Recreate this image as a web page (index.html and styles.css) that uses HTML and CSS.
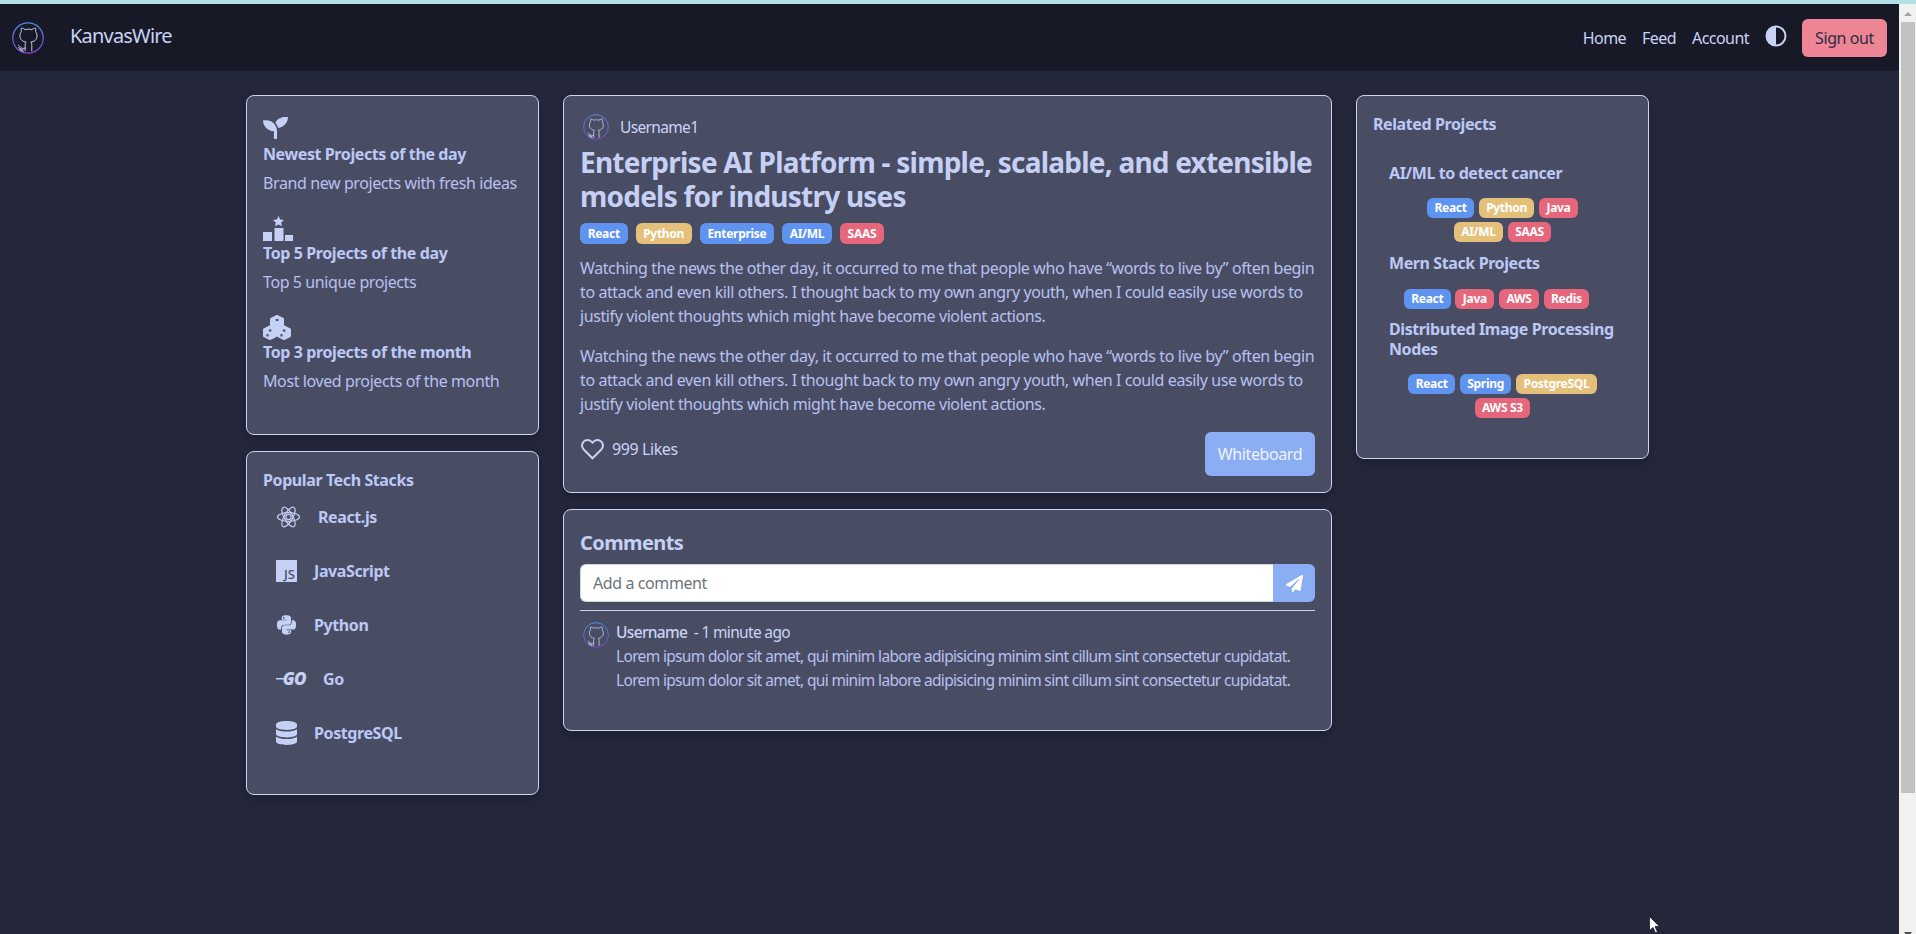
FILE: index.html
```html
<!DOCTYPE html>
<html>
    <head>
        <meta charset="UTF-8"/>
        <title>KanvasWire</title>
        <link rel="stylesheet" href="styles.css">
    </head>

    <body>
        <svg class="defs" width="0" height="0">
            <defs>
                <linearGradient id="ring" x1="0" y1="0" x2="0" y2="1">
                    <stop offset="0" stop-color="#4f8fe8"/>
                    <stop offset="1" stop-color="#8a3fd0"/>
                </linearGradient>
                <symbol id="logo" viewBox="0 0 32 32">
                    <circle cx="16" cy="16" r="15.2" fill="none" stroke="url(#ring)" stroke-width="1.2"/>
                    <g transform="translate(4.6 5.2) scale(0.95)" fill="none" stroke="#cad3f5" stroke-width="1" stroke-linecap="round" stroke-linejoin="round">
                        <path d="M9 22c-5 1.5-5-2.5-7-3m14 6v-6.87a3.37 3.37 0 0 0-.94-2.61c3.14-.35 6.44-1.54 6.44-7A5.44 5.44 0 0 0 20 4.77 5.07 5.07 0 0 0 19.91 1S18.73.65 16 2.48a13.38 13.38 0 0 0-7 0C6.27.65 5.09 1 5.09 1A5.07 5.07 0 0 0 5 4.77a5.44 5.44 0 0 0-1.5 3.75c0 5.42 3.3 6.61 6.44 7A3.37 3.37 0 0 0 9 18.13V25"/>
                        <path d="M2 21.5l5 2.5M3 23.5l4 2"/>
                    </g>
                </symbol>
            </defs>
        </svg>

        <div class="strip"></div>

        <div class="frame">
            <div class="page">
                <nav class="navbar">
                    <svg class="nav-logo"><use href="#logo"/></svg>
                    <span class="brand">KanvasWire</span>
                    <ul class="nav-links">
                        <li>Home</li>
                        <li>Feed</li>
                        <li>Account</li>
                    </ul>
                    <svg class="theme-toggle" viewBox="0 0 22 22">
                        <circle cx="11" cy="11" r="9.5" fill="#181926" stroke="#cad3f5" stroke-width="2"/>
                        <path d="M11 2a9 9 0 0 0 0 18z" fill="#cad3f5"/>
                    </svg>
                    <button class="signout">Sign out</button>
                </nav>

                <main class="layout">
                    <aside class="column">
                        <section class="card features">
                            <div class="feature">
                                <div class="feature-icon">
                                    <svg class="ic-seed" viewBox="0 32 512 448"><path d="M64 96H0c0 123.7 100.3 224 224 224v144c0 8.800 7.200 16 16 16h32c8.800 0 16-7.200 16-16V320C288 196.300 187.700 96 64 96zm384-64c-84.200 0-157.400 46.500-195.700 115.200 27.700 30.200 48.200 66.900 59 107.600C424 243.100 512 147.900 512 32h-64z"/></svg>
                                </div>
                                <h3>Newest Projects of the day</h3>
                                <p>Brand new projects with fresh ideas</p>
                            </div>
                            <div class="feature">
                                <div class="feature-icon">
                                    <svg class="ic-rank" viewBox="0 0 30 25">
                                        <polygon points="15.500,0 17.200,3.400 21,3.900 18.200,6.500 18.900,10.200 15.500,8.400 12.100,10.200 12.800,6.500 10,3.900 13.800,3.400"/>
                                        <rect x="0" y="16" width="9" height="9"/>
                                        <rect x="11.500" y="12" width="9" height="13"/>
                                        <rect x="22" y="19" width="8" height="6"/>
                                    </svg>
                                </div>
                                <h3>Top 5 Projects of the day</h3>
                                <p>Top 5 unique projects</p>
                            </div>
                            <div class="feature">
                                <div class="feature-icon">
                                    <svg class="ic-cubes" viewBox="0 0 28 25">
                                        <g stroke="#c6d0f5" stroke-width="2" stroke-linejoin="round">
                                            <polygon points="14,1 20,4 20,10.500 14,13.500 8,10.500 8,4"/>
                                            <polygon points="7,11.500 13,14.500 13,21 7,24 1,21 1,14.500"/>
                                            <polygon points="21,11.500 27,14.500 27,21 21,24 15,21 15,14.500"/>
                                        </g>
                                        <g fill="#494d64">
                                            <rect x="12.800" y="4" width="2.600" height="2"/>
                                            <rect x="5.800" y="14.500" width="2.600" height="2"/>
                                            <rect x="19.800" y="14.500" width="2.600" height="2"/>
                                            <rect x="3.500" y="19" width="2" height="2.500"/>
                                            <rect x="17.500" y="19" width="2" height="2.500"/>
                                        </g>
                                    </svg>
                                </div>
                                <h3>Top 3 projects of the month</h3>
                                <p>Most loved projects of the month</p>
                            </div>
                        </section>

                        <section class="card stacks">
                            <h3>Popular Tech Stacks</h3>
                            <ul class="stack-list">
                                <li>
                                    <svg class="ic-react" viewBox="0 0 24 22">
                                        <g fill="none" stroke="#c6d0f5" stroke-width="1.200">
                                            <ellipse cx="12" cy="11" rx="11" ry="4.300"/>
                                            <ellipse cx="12" cy="11" rx="11" ry="4.300" transform="rotate(60 12 11)"/>
                                            <ellipse cx="12" cy="11" rx="11" ry="4.300" transform="rotate(120 12 11)"/>
                                            <circle cx="12" cy="11" r="2.600"/>
                                        </g>
                                    </svg>
                                    <span>React.js</span>
                                </li>
                                <li>
                                    <div class="ic-js">JS</div>
                                    <span>JavaScript</span>
                                </li>
                                <li>
                                    <svg class="ic-python" viewBox="0 0 448 512"><path d="M439.800 200.500c-7.700-30.900-22.300-54.200-53.400-54.200h-40.100v47.400c0 36.800-31.200 67.800-66.800 67.800H172.700c-29.200 0-53.400 25-53.400 54.300v101.800c0 29 25.200 46 53.400 54.300 33.800 9.900 66.300 11.700 106.800 0 26.900-7.800 53.400-23.500 53.400-54.300v-40.700H226.200v-13.600h160.200c31.100 0 42.600-21.700 53.400-54.200 11.200-33.500 10.700-65.700 0-108.600zM286.200 404c11.100 0 20.100 9.100 20.100 20.300 0 11.300-9 20.400-20.100 20.400-11 0-20.100-9.200-20.100-20.400.1-11.300 9.100-20.300 20.100-20.300zM167.800 248.100h106.800c29.700 0 53.400-24.500 53.400-54.300V91.900c0-29-24.400-50.700-53.400-55.600-35.800-5.900-74.700-5.600-106.800.1-45.200 8-53.400 24.700-53.400 55.600v40.700h106.900v13.600h-147c-31.100 0-58.300 18.700-66.800 54.200-9.800 40.700-10.200 66.100 0 108.600 7.600 31.600 25.700 54.200 56.800 54.200H101v-48.800c0-35.300 30.500-66.400 66.800-66.400zm-6.700-142.600c-11.100 0-20.100-9.100-20.100-20.300.1-11.300 9-20.400 20.100-20.400 11 0 20.100 9.200 20.100 20.400s-9 20.300-20.100 20.300z"/></svg>
                                    <span>Python</span>
                                </li>
                                <li>
                                    <div class="ic-go">GO</div>
                                    <span>Go</span>
                                </li>
                                <li>
                                    <svg class="ic-db" viewBox="0 0 448 512"><path d="M448 73.143v45.714C448 159.143 347.667 192 224 192S0 159.143 0 118.857V73.143C0 32.857 100.333 0 224 0s224 32.857 224 73.143zM448 176v102.857C448 319.143 347.667 352 224 352S0 319.143 0 278.857V176c48.125 33.143 136.208 48.572 224 48.572S399.874 209.143 448 176zm0 160v102.857C448 479.143 347.667 512 224 512S0 479.143 0 438.857V336c48.125 33.143 136.208 48.572 224 48.572S399.874 369.143 448 336z"/></svg>
                                    <span>PostgreSQL</span>
                                </li>
                            </ul>
                        </section>
                    </aside>

                    <div class="column">
                        <article class="card post">
                            <div class="post-user">
                                <svg class="avatar"><use href="#logo"/></svg>
                                <span>Username1</span>
                            </div>
                            <h1>Enterprise AI Platform - simple, scalable, and extensible models for industry uses</h1>
                            <div class="tags post-tags">
                                <span class="tag blue">React</span>
                                <span class="tag yellow">Python</span>
                                <span class="tag blue">Enterprise</span>
                                <span class="tag blue">AI/ML</span>
                                <span class="tag red">SAAS</span>
                            </div>
                            <p>Watching the news the other day, it occurred to me that people who have “words to live by” often begin to attack and even kill others. I thought back to my own angry youth, when I could easily use words to justify violent thoughts which might have become violent actions.</p>
                            <p>Watching the news the other day, it occurred to me that people who have “words to live by” often begin to attack and even kill others. I thought back to my own angry youth, when I could easily use words to justify violent thoughts which might have become violent actions.</p>
                            <div class="post-actions">
                                <div class="likes">
                                    <svg class="heart" viewBox="0 0 24 22"><path d="M20.840 3.610a5.500 5.500 0 0 0-7.780 0L12 4.670l-1.060-1.060a5.500 5.500 0 0 0-7.780 7.780l1.060 1.060L12 20.230l7.780-7.780 1.060-1.060a5.500 5.500 0 0 0 0-7.780z"/></svg>
                                    <span>999 Likes</span>
                                </div>
                                <button class="whiteboard">Whiteboard</button>
                            </div>
                        </article>

                        <section class="card comments">
                            <h2>Comments</h2>
                            <div class="comment-form">
                                <input type="text" placeholder="Add a comment">
                                <button class="send">
                                    <svg viewBox="0 0 512 512"><path d="M476 3.200L12.500 270.600c-18.100 10.400-15.800 35.600 2.200 43.200L121 358.400l287.300-253.200c5.500-4.900 13.300 2.600 8.600 8.300L176 407v80.500c0 23.600 28.500 32.900 42.500 15.800L282 426l124.600 52.200c14.200 6 30.400-2.900 33-18.200l72-432C515 7.800 493.300-6.800 476 3.200z"/></svg>
                                </button>
                            </div>
                            <div class="comment">
                                <svg class="avatar"><use href="#logo"/></svg>
                                <div class="comment-body">
                                    <div><span class="comment-user">Username</span> <span class="comment-time">- 1 minute ago</span></div>
                                    <div>Lorem ipsum dolor sit amet, qui minim labore adipisicing minim sint cillum sint consectetur cupidatat.</div>
                                    <div>Lorem ipsum dolor sit amet, qui minim labore adipisicing minim sint cillum sint consectetur cupidatat.</div>
                                </div>
                            </div>
                        </section>
                    </div>

                    <aside class="column">
                        <section class="card related">
                            <h3>Related Projects</h3>
                            <div class="related-item">
                                <h4>AI/ML to detect cancer</h4>
                                <div class="tags">
                                    <span class="tag blue">React</span>
                                    <span class="tag yellow">Python</span>
                                    <span class="tag red">Java</span>
                                    <span class="tag yellow">AI/ML</span>
                                    <span class="tag red">SAAS</span>
                                </div>
                            </div>
                            <div class="related-item">
                                <h4>Mern Stack Projects</h4>
                                <div class="tags tags-mern">
                                    <span class="tag blue">React</span>
                                    <span class="tag red">Java</span>
                                    <span class="tag red">AWS</span>
                                    <span class="tag red">Redis</span>
                                </div>
                            </div>
                            <div class="related-item">
                                <h4>Distributed Image Processing Nodes</h4>
                                <div class="tags">
                                    <span class="tag blue">React</span>
                                    <span class="tag blue">Spring</span>
                                    <span class="tag yellow">PostgreSQL</span>
                                    <span class="tag red">AWS S3</span>
                                </div>
                            </div>
                        </section>
                    </aside>
                </main>
            </div>

            <div class="scrollbar">
                <div class="arrow-up"></div>
                <div class="thumb"></div>
                <div class="arrow-down"></div>
            </div>
        </div>

        <svg class="cursor" width="12" height="18" viewBox="0 0 12 18"><path d="M0.500 0.500V14.500L4 11.500L6.500 17L8.500 16L6 10.500H10.500Z" fill="#fff" stroke="#181926" stroke-width="0.800"/></svg>
    </body>
</html>
```

FILE: styles.css
```css
*{
    box-sizing:border-box;
}
html,body{
    margin:0;
    height:100%;
    overflow:hidden;
}
body{
    display:flex;
    flex-direction:column;
    background:#24273a;
    color:#b8c0f0;
    font-family:"Noto Sans","Open Sans",sans-serif;
    font-size:16px;
    letter-spacing:-0.4px;
    line-height:24px;
}
h1,h2,h3,h4,p,ul{
    margin:0;
    padding:0;
}
ul{
    list-style:none;
}
.defs{
    display:block;
    height:0;
}

.strip{
    height:4px;
    flex:none;
    background:#b3e0e4;
}
.frame{
    flex:1;
    display:flex;
    min-height:0;
}
.page{
    flex:1;
    min-width:0;
}

/* scrollbar */
.scrollbar{
    width:17px;
    flex:none;
    display:flex;
    flex-direction:column;
    align-items:center;
    background:#f1f1f1;
}
.arrow-up{
    width:0;
    height:0;
    margin-top:8px;
    border-left:4px solid transparent;
    border-right:4px solid transparent;
    border-bottom:4px solid #a3a3a3;
}
.thumb{
    width:14px;
    height:771px;
    margin-top:6px;
    background:#c1c1c1;
}
.arrow-down{
    width:0;
    height:0;
    margin-top:auto;
    margin-bottom:-3px;
    border-left:4px solid transparent;
    border-right:4px solid transparent;
    border-top:5px solid #505050;
}

/* navbar */
.navbar{
    height:67px;
    display:flex;
    align-items:center;
    padding:0 12px;
    background:#181926;
    color:#cad3f5;
}
.nav-logo{
    width:32px;
    height:32px;
    flex:none;
}
.brand{
    margin-left:26px;
    font-size:20px;
    letter-spacing:-0.8px;
    margin-top:-3px;
}
.nav-links{
    display:flex;
    gap:16px;
    margin-left:auto;
    letter-spacing:-0.55px;
}
.theme-toggle{
    width:22px;
    height:22px;
    margin:-4px 15px 0 16px;
}
.signout{
    width:85px;
    height:38px;
    border:none;
    border-radius:6px;
    background:#ee8595;
    color:#2b2d42;
    font:inherit;
    letter-spacing:inherit;
}

/* page grid */
.layout{
    display:grid;
    grid-template-columns:293px 769px 293px;
    column-gap:24px;
    align-items:start;
    padding:24px 0 0 246px;
}
.column{
    display:flex;
    flex-direction:column;
    gap:16px;
}
.card{
    background:#494d64;
    border:1px solid #cad3f5;
    border-radius:8px;
    box-shadow:0 4px 8px rgba(0,0,0,.2);
    padding:16px;
}
h3,h4{
    color:#bcc8f5;
    font-size:16px;
    font-weight:700;
}

/* left cards */
.features{
    height:340px;
    padding:21px 16px 0;
}
.feature{
    margin-bottom:22px;
}
.feature:last-child{
    margin-bottom:0;
}
.feature-icon{
    height:25px;
}
.feature-icon svg{
    display:block;
    fill:#c6d0f5;
}
.ic-seed{
    width:25px;
    height:22px;
}
.ic-rank{
    width:30px;
    height:25px;
    margin-top:-1px;
}
.ic-cubes{
    width:28px;
    height:25px;
    margin-top:-1px;
}
.feature p{
    margin-top:5px;
}

.stacks{
    height:344px;
}
.stack-list{
    display:flex;
    flex-direction:column;
    gap:24px;
    margin-top:10px;
    padding-left:13px;
}
.stack-list li{
    display:flex;
    align-items:center;
    gap:17px;
    height:30px;
    color:#bcc8f5;
    font-weight:700;
}
.stack-list svg{
    fill:#c6d0f5;
    flex:none;
}
.ic-react{
    width:25px;
    height:22px;
}
.ic-js{
    width:21px;
    height:22px;
    padding:7px 2px 0 0;
    background:#c6d0f5;
    color:#494d64;
    font-size:13px;
    font-weight:500;
    line-height:15px;
    text-align:right;
    letter-spacing:0;
}
.ic-python{
    width:21px;
    height:22px;
}
.ic-go{
    width:30px;
    color:#c6d0f5;
    font-size:17px;
    font-weight:900;
    font-style:italic;
    line-height:20px;
    text-align:right;
    letter-spacing:-0.6px;
    background:linear-gradient(#c6d0f5,#c6d0f5) no-repeat 0 9px/8px 1.5px;
}
.ic-db{
    width:21px;
    height:24px;
}

/* post */
.post{
    height:398px;
    padding:18px 16px 16px;
}
.post-user{
    display:flex;
    align-items:center;
    gap:11px;
    padding-left:3px;
    color:#cad3f5;
    font-size:15.5px;
    letter-spacing:-0.66px;
}
.avatar{
    width:26px;
    height:26px;
    flex:none;
}
.post h1{
    margin-top:5px;
    color:#c6d0f5;
    font-size:28px;
    font-weight:700;
    line-height:34px;
    letter-spacing:-0.78px;
}
.tags{
    display:flex;
    flex-wrap:wrap;
    justify-content:center;
    gap:4px 4.5px;
}
.post-tags{
    justify-content:flex-start;
    gap:8px;
    margin-top:10px;
    margin-bottom:12px;
}
.tag{
    height:20px;
    padding:0 7.5px;
    border-radius:6px;
    color:#fff;
    font-size:12px;
    font-weight:700;
    line-height:20px;
    letter-spacing:-0.3px;
}
.post-tags .tag{
    height:21px;
    padding:0 7.7px;
    line-height:21px;
}
.blue{
    background:#5f93f0;
}
.yellow{
    background:#e5c07b;
}
.red{
    background:#e6667c;
}
.post p + p{
    margin-top:16px;
}
.post-actions{
    display:flex;
    justify-content:space-between;
    align-items:flex-start;
    margin-top:16px;
}
.likes{
    display:flex;
    align-items:center;
    gap:7px;
    margin-top:5px;
    color:#cad3f5;
}
.heart{
    width:25px;
    height:22px;
    fill:none;
    stroke:#cad3f5;
    stroke-width:2;
}
.whiteboard{
    width:110px;
    height:44px;
    border:none;
    border-radius:6px;
    background:#8aadf4;
    color:#f0f2fd;
    font:inherit;
    letter-spacing:inherit;
}

/* comments */
.comments{
    height:222px;
    padding-top:19px;
}
.comments h2{
    color:#c6d0f5;
    font-size:20px;
    font-weight:700;
    line-height:28px;
    letter-spacing:-0.6px;
}
.comment-form{
    display:flex;
    height:38px;
    margin-top:7px;
    padding-bottom:0;
}
.comment-form input{
    flex:1;
    min-width:0;
    padding:0 12px;
    border:1px solid #ced4da;
    border-right:none;
    border-radius:6px 0 0 6px;
    background:#fff;
    color:#24273a;
    font:inherit;
    letter-spacing:inherit;
    outline:none;
}
.comment-form input::placeholder{
    color:#6c757d;
    opacity:1;
}
.send{
    width:42px;
    padding:0;
    border:none;
    border-radius:0 6px 6px 0;
    background:#8aadf4;
    display:flex;
    align-items:center;
    justify-content:center;
}
.send svg{
    width:17px;
    height:17px;
    fill:#fff;
}
.comment{
    display:flex;
    gap:7px;
    margin-top:8px;
    padding:9px 0 0 3px;
    border-top:1px solid #cad3f5;
}
.comment .avatar{
    margin-top:2px;
}
.comment-body{
    font-size:15.5px;
    letter-spacing:-0.66px;
}
.comment-user{
    color:#cad3f5;
    font-weight:500;
}
.comment-time{
    margin-left:3px;
    color:#cad3f5;
}

/* related */
.related{
    padding-bottom:40px;
}
.related-item{
    margin-top:11px;
    padding-left:16px;
}
.related-item:first-of-type{
    margin-top:27px;
}
.related-item h4{
    line-height:20px;
}
.related-item .tags{
    width:200px;
    margin-top:15px;
    margin-left:13.5px;
}
.related-item .tags-mern{
    margin-top:16px;
    margin-bottom:-1px;
    padding-right:12px;
}

/* mouse pointer in the shot */
.cursor{
    position:absolute;
    left:1649px;
    top:916px;
}
```
